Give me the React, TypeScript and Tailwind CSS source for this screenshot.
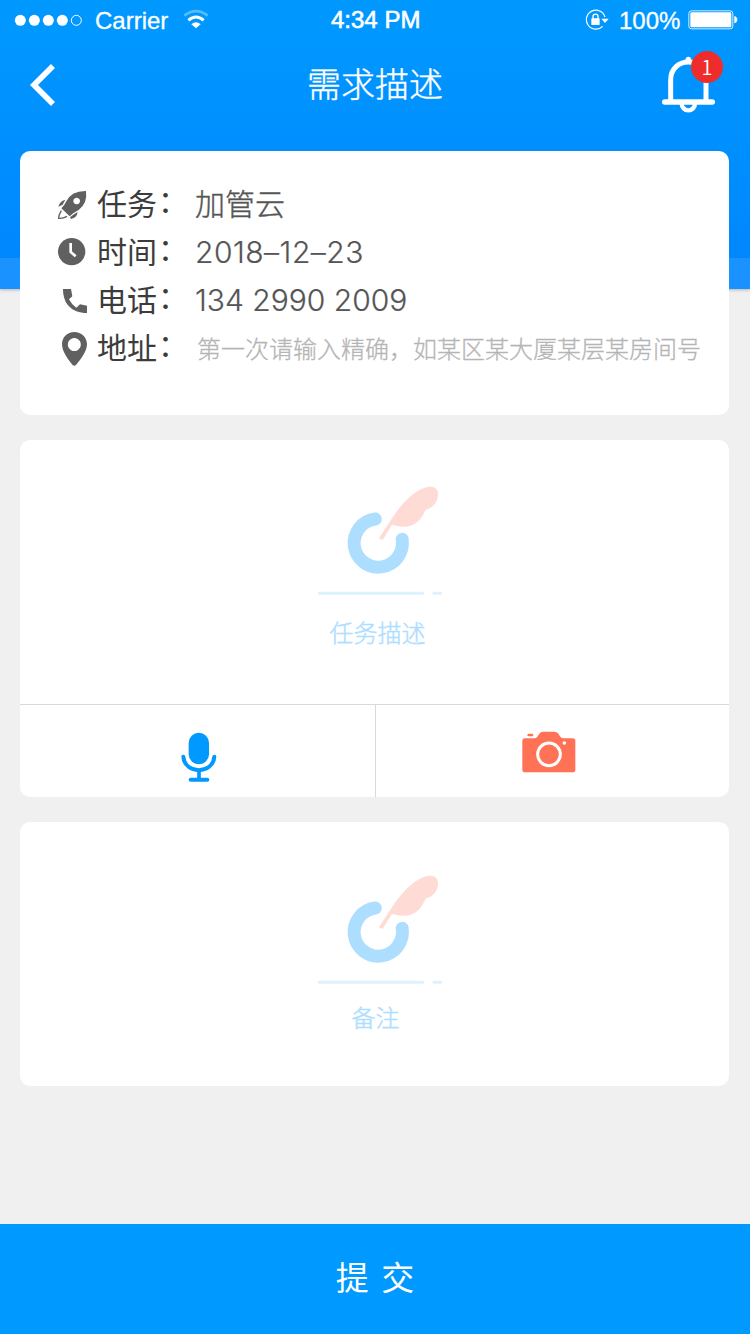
import type { ReactNode } from "react";

const cjk = "font-['Noto_Sans_CJK_SC',sans-serif]";
const latin = "font-['Liberation_Sans',sans-serif]";

function StatusBar() {
  return (
    <div className={`grid h-10 grid-cols-[331px_1fr_165px] items-center text-2xl leading-[38px] ${latin}`}>
      <div className="flex items-center pl-3.5">
        <svg className="h-[13px] w-[69px]" viewBox="0 0 207 39" fill="white">
          {[19, 61, 103, 145].map((x) => (
            <circle key={x} cx={x} cy="19" r="16.5" />
          ))}
          <circle cx="187" cy="19" r="15" fill="none" stroke="white" strokeWidth="3" />
        </svg>
        <span className="ml-3 pt-px [-webkit-text-stroke:0.3px_white]">Carrier</span>
        <svg className="mb-[3px] ml-[15px] h-[20px] w-[26px]" viewBox="549 30 78 60" fill="none" stroke="white">
          <path d="M553 50Q588 23 623 50" strokeWidth="8" opacity=".35" />
          <path d="M565 64Q588 44 611 64" strokeWidth="9" />
          <path d="M574 76Q588 63 602 76L588 88Z" fill="white" stroke="none" />
        </svg>
      </div>
      <span className="whitespace-nowrap [-webkit-text-stroke:0.6px_white]">4:34 PM</span>
      <div className="flex items-center">
        <svg className="mb-px h-[22px] w-6" viewBox="103 28 72 66" fill="none" stroke="white" strokeWidth="3.5">
          <path d="M163 52A28.5 28.5 0 1 0 156 80" />
          <path d="M152 57H174L163 70Z" fill="white" stroke="none" />
          <rect x="122" y="56" width="25" height="20" rx="2" fill="white" stroke="none" />
          <path d="M127 58V51A7.500 7.500 0 0 1 142 51V58" strokeWidth="4" />
        </svg>
        <span className="ml-2.5 pt-px [-webkit-text-stroke:0.3px_white]">100%</span>
        <svg className="ml-2 h-5 w-[50px]" viewBox="413 32 150 60" fill="white">
          <rect x="415.500" y="34.500" width="132" height="54" rx="8" fill="none" stroke="white" strokeWidth="2.5" />
          <rect x="420" y="39" width="123" height="45" rx="4" />
          <path d="M552 50Q561 53 561 61T552 72Z" />
        </svg>
      </div>
    </div>
  );
}

function Bell() {
  return (
    <div className="relative h-[59px] w-[55px]">
      <svg className="h-full w-full" viewBox="333 165 165 177" fill="none" stroke="white">
        <circle cx="415" cy="178" r="8" fill="white" stroke="none" />
        <path d="M362 303V239C362 207 386 186 415 186S468 207 468 239V303" strokeWidth="15" />
        <path d="M344 306H487" strokeWidth="16" strokeLinecap="round" />
        <path d="M395 311A20 20 0 0 0 435 311" strokeWidth="13" />
      </svg>
      <span className="absolute -top-1 left-[30px] h-8 w-8 rounded-full bg-[#ee2c2c] text-center font-['Noto_Sans_CJK_SC',sans-serif] text-xl leading-8 font-[350] text-white">
        1
      </span>
    </div>
  );
}

function InfoRow({ icon, label, children }: { icon: ReactNode; label: string; children: ReactNode }) {
  return (
    <div className="flex h-12 items-center whitespace-nowrap">
      {icon}
      <span className="ml-[5px] flex w-[98px] pb-[3px] text-[30px] leading-[45px] text-[#3c3c3c]">
        {label}
        <span className="-mt-[3px] ml-px">：</span>
      </span>
      {children}
    </div>
  );
}

const iconClass = "h-9 w-9 shrink-0 fill-[#606060]";

function RocketIcon() {
  return (
    <svg className={iconClass} viewBox="168 138 108 108">
      <path
        fillRule="evenodd"
        d="M258 153Q263 190 236 210Q220 218 209 229L184 205Q193 197 199 184Q215 152 258 153ZM230 173a10 10 0 1 0 .1 0Z"
      />
      <path d="M196 179L188 194L175 200Q179 183 196 179ZM233 216Q231 233 213 237L210 232L223 222Z" />
      <path d="M184 212Q176 225 176 235Q189 236 201 229" fill="none" stroke="#606060" strokeWidth="4" />
    </svg>
  );
}

function ClockIcon() {
  return (
    <svg className={iconClass} viewBox="168 282 108 108">
      <circle cx="215" cy="335" r="41" />
      <path d="M212 309V336L227 349" fill="none" stroke="white" strokeWidth="8" />
    </svg>
  );
}

function PhoneIcon() {
  return (
    <svg className={iconClass} viewBox="168 426 108 108">
      <path d="M189 447H213L217 469L207 478Q215 494 229 503L240 493L261 497V519C213 519 189 490 189 447Z" />
    </svg>
  );
}

function PinIcon() {
  return (
    <svg className={iconClass} viewBox="168 570 108 108">
      <path
        fillRule="evenodd"
        d="M223 576C202 576 186 592 186 613C186 635 206 661 218 675Q223 680 228 675C240 661 261 635 261 613C261 592 244 576 223 576ZM223 594a19.500 19.500 0 1 1-.1 0Z"
      />
    </svg>
  );
}

function QuillArt() {
  return (
    <svg className="h-[111px] w-[124px]" viewBox="54 45 372 333" fill="none">
      <path d="M226 147A72.500 72.500 0 1 0 306.500 208" stroke="#addeff" strokeWidth="39" strokeLinecap="round" />
      <path
        d="M237 205L272 151C299 107 344 55 387 50C406 49 415 58 414 75C413 98 398 114 377 119C361 157 333 183 276 164L248 210Z"
        fill="#ffdbd6"
      />
      <path d="M58 370H368M402 370H422" stroke="#ddf1ff" strokeWidth="9" strokeLinecap="round" />
    </svg>
  );
}

function MicIcon() {
  return (
    <svg className="h-[50px] w-9" viewBox="92 127 108 150" fill="none" stroke="#0099ff" strokeLinecap="round">
      <rect x="115" y="129" width="61" height="95" rx="30.500" fill="#0099ff" stroke="none" />
      <path d="M99 201C103 255 188 255 192 201" strokeWidth="12" />
      <path d="M146 242V270" strokeWidth="11" strokeLinecap="butt" />
      <path d="M121 270.500H171" strokeWidth="12" />
    </svg>
  );
}

function CameraIcon() {
  return (
    <svg className="h-[42px] w-[54px]" viewBox="65 64 162 126" fill="#ff7256">
      <path d="M74 86H102Q108 86 111 81L118 71Q121 66 127 66H163Q169 66 173 71L180 81Q184 86 190 86H217Q225 86 225 94V181Q225 188 217 188H74Q66 188 66 181V94Q66 86 74 86Z" />
      <rect x="81" y="72" width="18" height="8" rx="4" />
      <circle cx="146" cy="134" r="34" fill="none" stroke="white" strokeWidth="9" />
      <circle cx="192" cy="100" r="5.500" fill="white" />
    </svg>
  );
}

export default function App() {
  return (
    <div className={`flex h-[1334px] w-[750px] flex-col bg-[#f0f0f0] ${cjk}`}>
      <header className="flex h-[289px] shrink-0 flex-col bg-linear-to-b from-[#0099ff] to-[#0085ff] text-white shadow-[0_1px_3px_rgba(0,0,0,0.25)]">
        <StatusBar />
        <div className="grid h-[90px] grid-cols-[1fr_auto_1fr] pr-[34px] pl-[29px]">
          <button className="mt-[23px] h-11 w-7" aria-label="返回">
            <svg className="h-11 w-7" viewBox="87 189 84 132" fill="none" stroke="white" strokeWidth="17">
              <path d="M159 198L102 255L159 312" />
            </svg>
          </button>
          <h1 className="ml-[5px] text-[34px] leading-[86px] font-light [-webkit-text-stroke:0.4px_white]">需求描述</h1>
          <div className="mt-[15px] justify-self-end">
            <Bell />
          </div>
        </div>
        <div className="mt-auto h-[31px] bg-white/10" />
      </header>

      <main className="relative -mt-[138px] ml-5 flex w-[709px] flex-col gap-[25px]">
        <section className="h-[264px] rounded-[10px] bg-white pt-[29px] pl-9">
          <InfoRow icon={<RocketIcon />} label="任务">
            <span className="pb-[3px] text-[30px] leading-[45px] font-light text-[#555] [-webkit-text-stroke:0.4px_#555]">加管云</span>
          </InfoRow>
          <InfoRow icon={<ClockIcon />} label="时间">
            <span className="font-['Inter',sans-serif] text-[30px] font-light tracking-[0.5px] text-[#555] [-webkit-text-stroke:0.2px_#555]">2018–12–23</span>
          </InfoRow>
          <InfoRow icon={<PhoneIcon />} label="电话">
            <span className="font-['Inter',sans-serif] text-[30px] font-light text-[#555] [-webkit-text-stroke:0.2px_#555]">134 2990 2009</span>
          </InfoRow>
          <InfoRow icon={<PinIcon />} label="地址">
            <span className="ml-0.5 text-2xl font-light text-[#b5b5b5] [-webkit-text-stroke:0.3px_#b5b5b5]">第一次请输入精确，如某区某大厦某层某房间号</span>
          </InfoRow>
        </section>

        <section className="flex h-[357px] flex-col rounded-[10px] bg-white">
          <div className="flex h-[264px] flex-col items-center pt-[45px]">
            <div className="ml-[11px] h-[111px]">
              <QuillArt />
            </div>
            <p className="mt-[18px] ml-[6px] text-2xl leading-9 font-light text-[#addeff] [-webkit-text-stroke:0.4px_#addeff]">任务描述</p>
          </div>
          <div className="grid flex-1 grid-cols-[356px_1fr] border-t border-[#d9d9d9]">
            <button className="flex justify-center border-r border-[#d9d9d9] pt-[27px] pl-0.5" aria-label="语音">
              <MicIcon />
            </button>
            <button className="flex justify-center pt-[26px] pr-[8px]" aria-label="拍照">
              <CameraIcon />
            </button>
          </div>
        </section>

        <section className="flex h-[264px] flex-col items-center rounded-[10px] bg-white pt-[52px]">
          <div className="ml-[11px] h-[111px]">
            <QuillArt />
          </div>
          <p className="mt-[14px] ml-0.5 text-2xl leading-9 font-light text-[#addeff] [-webkit-text-stroke:0.4px_#addeff]">备注</p>
        </section>
      </main>

      <footer className="mt-auto h-[110px] bg-[#0099ff]">
        <button className="h-full w-full pb-[6px] text-[33px] leading-none text-white [word-spacing:5px]">提 交</button>
      </footer>
    </div>
  );
}
